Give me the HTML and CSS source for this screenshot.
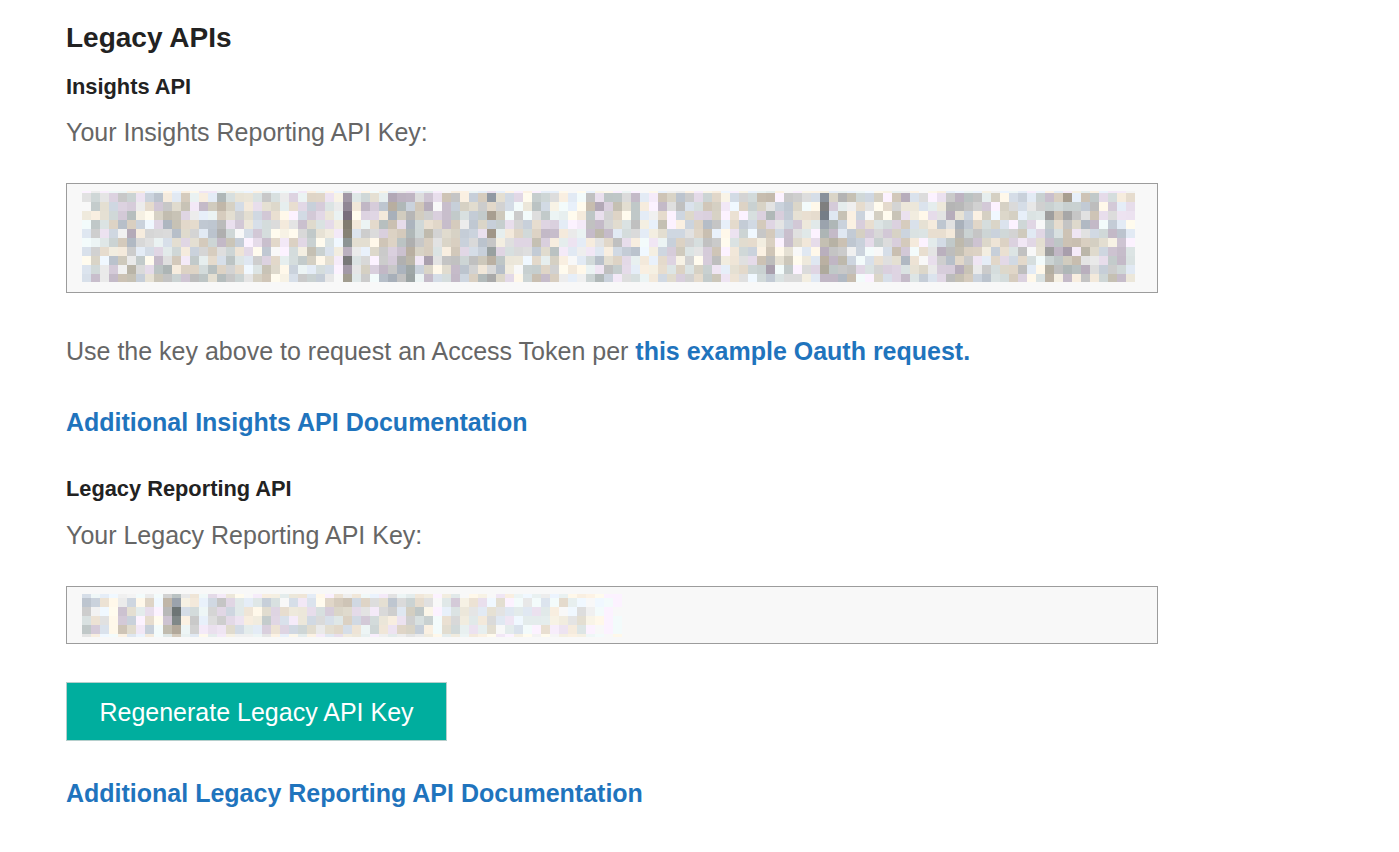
FILE: index.html
```html
<!DOCTYPE html>
<html lang="en">
<head>
<meta charset="utf-8">
<title>Legacy APIs</title>
<link rel="stylesheet" href="styles.css">
</head>
<body>
<main class="page">
  <h2 class="title">Legacy APIs</h2>
  <h3 class="subtitle">Insights API</h3>
  <p class="label">Your Insights Reporting API Key:</p>
  <div class="keybox keybox-large"><canvas id="key1" class="mosaic" width="1053" height="91"></canvas></div>
  <p class="usage">Use the key above to request an Access Token per <a class="link" href="#">this example Oauth request.</a></p>
  <p class="doc"><a class="link" href="#">Additional Insights API Documentation</a></p>
  <h3 class="subtitle subtitle-second">Legacy Reporting API</h3>
  <p class="label label-second">Your Legacy Reporting API Key:</p>
  <div class="keybox keybox-small"><canvas id="key2" class="mosaic" width="540" height="46"></canvas></div>
  <button class="regen" type="button">Regenerate Legacy API Key</button>
  <p class="doc doc-last"><a class="link" href="#">Additional Legacy Reporting API Documentation</a></p>
</main>
<script src="mosaic.js"></script>
</body>
</html>
```
FILE: styles.css
```css
* { box-sizing: border-box; }
html, body { margin: 0; padding: 0; background: #fff; }
body { font-family: "Liberation Sans", Arial, sans-serif; color: #666; height: 852px; overflow: hidden; }
.page { padding: 21px 0 0 66px; width: 1158px; display: flex; flex-direction: column; align-items: flex-start; }
.title { margin: 0; font-size: 28px; line-height: 34px; font-weight: 700; color: #222; }
.subtitle { margin: 19px 0 0; font-size: 21.8px; line-height: 26px; font-weight: 700; color: #222; }
.subtitle-second { margin-top: 39px; }
.label { margin: 17px 0 0; font-size: 25px; line-height: 30px; color: #666; }
.label-second { margin-top: 18px; }
.keybox { width: 1092px; background: #f8f8f8; border: 1px solid #9c9c9c; padding: 7px 15px; }
.keybox-large { height: 110px; margin-top: 36px; }
.keybox-small { height: 58px; margin-top: 36px; }
.mosaic { display: block; }
.usage { margin: 43px 0 0; font-size: 25px; line-height: 30px; color: #666; }
.doc { margin: 41px 0 0; font-size: 25px; line-height: 30px; font-weight: 700; }
.doc-last { margin-top: 37px; }
.link { color: #1f74bd; font-weight: 700; text-decoration: none; }
.regen { margin-top: 38px; width: 381px; height: 59px; background: #00ae9e; border: 1px solid #b5cfcc; color: #fff; font-family: inherit; font-size: 25px; padding: 2px 0 0; }
```
FILE: mosaic.js
```js
(function () {
  var seed = 12345;
  function rnd() {
    seed = (seed * 1664525 + 1013904223) >>> 0;
    return seed / 4294967296;
  }
  var tints = [[0, 0, 0], [8, 3, -10], [-8, 0, 10], [4, -6, 8], [-5, 3, 3], [10, 0, -14]];
  function colour(dark) {
    var v = 248 - dark * (0.5 + rnd() * 0.65) * 13;
    var t = tints[Math.floor(rnd() * tints.length)];
    return "rgb(" + Math.round(v + t[0]) + "," + Math.round(v + t[1]) + "," + Math.round(v + t[2]) + ")";
  }
  function draw(id, profile, rows, top, strength) {
    var ctx = document.getElementById(id).getContext("2d");
    var y = 0;
    rows.forEach(function (rowH, r) {
      for (var c = 0; c < profile.length; c++) {
        var d = parseInt(profile.charAt(c), 10);
        var fade = r === 0 ? top : (rowH < 6 ? 0.45 : 1);
        if (d < 9 && rnd() < 0.2) d = Math.max(0, d - 3);
        ctx.fillStyle = colour(d * fade * (d < 9 ? strength : 1));
        ctx.fillRect(c * 9, y, 9, rowH);
      }
      y += rowH;
    });
  }
  var p1 = "2424454345" + "4444455323" + "4313443219" + "2434556463" +
           "4444574233" + "4441114544" + "3411434334" + "4123346343" +
           "2295543333" + "4523255544" + "4333423647" + "4543442";
  draw("key1", p1, [2, 9, 9, 9, 9, 9, 9, 9, 9, 9, 8], 0.2, 1);
  var p2 = "5430542408" + "9451554322" + "5334433455" + "4443555540" +
           "4423233232" + "2313231000";
  draw("key2", p2, [4, 9, 9, 9, 9, 3], 0.5, 0.7);
})();
```
